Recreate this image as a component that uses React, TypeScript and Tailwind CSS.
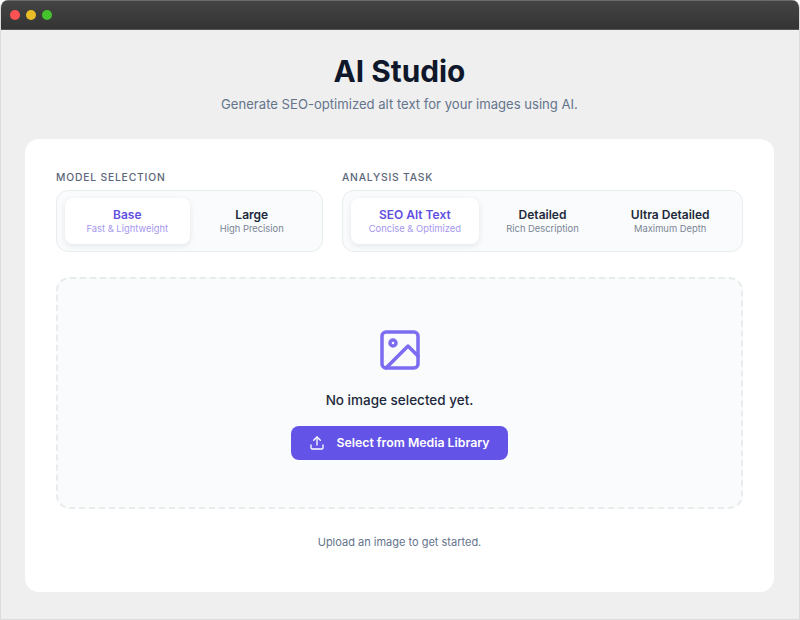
import { Upload } from 'lucide-react';

interface Option {
  title: string;
  sub: string;
}

const models: Option[] = [
  { title: 'Base', sub: 'Fast & Lightweight' },
  { title: 'Large', sub: 'High Precision' },
];

const tasks: Option[] = [
  { title: 'SEO Alt Text', sub: 'Concise & Optimized' },
  { title: 'Detailed', sub: 'Rich Description' },
  { title: 'Ultra Detailed', sub: 'Maximum Depth' },
];

function Segment({ label, options }: { label: string; options: Option[] }) {
  return (
    <div className="flex flex-col">
      <h2 className="mb-[6px] text-[10.3px] leading-[14px] font-medium uppercase tracking-[0.08em] text-[#5b6678]">
        {label}
      </h2>
      <div className="flex h-[62px] rounded-[12px] border border-[#e8edee] bg-[#f9fbfc] px-[8px] py-[7px]">
        {options.map((o, i) => (
          <div
            key={o.title}
            className={
              i === 0
                ? 'flex flex-1 flex-col items-center justify-center rounded-[8px] bg-white shadow-[0_2px_6px_rgba(15,23,42,0.09)]'
                : 'flex flex-1 flex-col items-center justify-center rounded-[8px]'
            }
          >
            <span className={i === 0 ? 'text-[12px] leading-[15px] font-semibold text-[#5f4fe0]' : 'text-[12px] leading-[15px] font-semibold text-[#1e293b]'}>
              {o.title}
            </span>
            <span className={i === 0 ? 'text-[9.4px] leading-[14px] text-[#a597ee]' : 'text-[9.4px] leading-[14px] text-[#7b8594]'}>
              {o.sub}
            </span>
          </div>
        ))}
      </div>
    </div>
  );
}

export default function App() {
  return (
    <div className="flex h-[620px] w-[800px] flex-col overflow-hidden rounded-t-[8px] border-x border-b border-[#dcdcdc] bg-[#efefef] font-['Inter',sans-serif]">
      <div className="flex h-[30px] shrink-0 items-center gap-[6px] border-t border-b border-t-[#6a6a6a] border-b-[#555555] bg-gradient-to-b from-[#444444] to-[#343434] pl-[9px]">
        <span className="h-[10px] w-[10px] rounded-full bg-[#ff5252]" />
        <span className="h-[10px] w-[10px] rounded-full bg-[#e9bd28]" />
        <span className="h-[10px] w-[10px] rounded-full bg-[#45c32d]" />
      </div>

      <div className="flex flex-1 flex-col pl-[24px] pr-[25px] pb-[27px]">
        <div className="flex h-[109px] shrink-0 flex-col items-center pt-[22px]">
          <h1 className="text-[29.8px] leading-[38px] font-bold text-[#0f172a]">AI Studio</h1>
          <p className="mt-[4px] text-[13.1px] leading-[20px] text-[#64748b]">
            Generate SEO-optimized alt text for your images using AI.
          </p>
        </div>

        <div className="flex flex-1 flex-col rounded-[14px] bg-white px-[31px] pt-[31px]">
          <div className="grid grid-cols-[267px_401px] gap-[19px]">
            <Segment label="Model Selection" options={models} />
            <Segment label="Analysis Task" options={tasks} />
          </div>

          <div className="mt-[25px] flex h-[232px] flex-col items-center rounded-[14px] border-2 border-dashed border-[#e8edeb] bg-[#f9fbfd] pt-[47px]">
            <svg
              viewBox="0 0 24 24"
              fill="none"
              stroke="currentColor"
              strokeWidth={1.75}
              strokeLinecap="round"
              strokeLinejoin="round"
              className="h-[48px] w-[48px] text-[#7c6cf0]"
            >
              <rect x="3" y="3" width="18" height="18" rx="2" ry="2" />
              <circle cx="8.5" cy="8.5" r="1.5" />
              <polyline points="21 15 16 10 5 21" />
            </svg>
            <p className="mt-[16px] text-[13.5px] leading-[20px] font-medium text-[#1e293b]">No image selected yet.</p>
            <button className="mt-[16px] flex h-[34px] w-[217px] items-center justify-center gap-[11px] rounded-[8px] bg-[#6353e6] text-[12.3px] font-semibold text-white">
              <Upload className="h-[16px] w-[16px]" strokeWidth={2} />
              Select from Media Library
            </button>
          </div>

          <p className="mt-[25px] text-center text-[11px] leading-[16px] text-[#64748b]">Upload an image to get started.</p>
        </div>
      </div>
    </div>
  );
}
